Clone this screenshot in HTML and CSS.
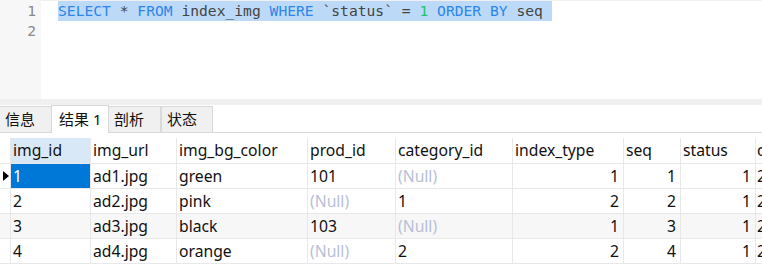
FILE: index.html
```html
<!DOCTYPE html>
<html>
<head>
<meta charset="utf-8">
<link rel="stylesheet" href="styles.css">
</head>
<body>
<div class="editor">
  <div class="gutter">
    <div class="ln">1</div>
    <div class="ln">2</div>
  </div>
  <div class="code">
    <div class="line"><span class="sel"><span class="kw">SELECT</span> * <span class="kw">FROM</span> index_img <span class="kw">WHERE</span> `status` = <span class="num">1</span> <span class="kw">ORDER BY</span> seq </span></div>
    <div class="line"></div>
  </div>
</div>
<div class="band"></div>
<div class="tabbar">
  <div class="tab first">信息</div>
  <div class="tab active">结果 1</div>
  <div class="tab">剖析</div>
  <div class="tab">状态</div>
</div>
<div class="grid">
  <div class="row head">
    <div class="c ind"></div>
    <div class="c hl">img_id</div>
    <div class="c">img_url</div>
    <div class="c">img_bg_color</div>
    <div class="c">prod_id</div>
    <div class="c">category_id</div>
    <div class="c">index_type</div>
    <div class="c">seq</div>
    <div class="c">status</div>
    <div class="c last">create_time</div>
  </div>
  <div class="row">
    <div class="c ind"><span class="tri"></span></div>
    <div class="c selcell">1</div>
    <div class="c">ad1.jpg</div>
    <div class="c">green</div>
    <div class="c">101</div>
    <div class="c null">(Null)</div>
    <div class="c r">1</div>
    <div class="c r">1</div>
    <div class="c r">1</div>
    <div class="c last">2020-01-01</div>
  </div>
  <div class="row">
    <div class="c ind"></div>
    <div class="c">2</div>
    <div class="c">ad2.jpg</div>
    <div class="c">pink</div>
    <div class="c null">(Null)</div>
    <div class="c">1</div>
    <div class="c r">2</div>
    <div class="c r">2</div>
    <div class="c r">1</div>
    <div class="c last">2020-01-01</div>
  </div>
  <div class="row alt">
    <div class="c ind"></div>
    <div class="c">3</div>
    <div class="c">ad3.jpg</div>
    <div class="c">black</div>
    <div class="c">103</div>
    <div class="c null">(Null)</div>
    <div class="c r">1</div>
    <div class="c r">3</div>
    <div class="c r">1</div>
    <div class="c last">2020-01-01</div>
  </div>
  <div class="row">
    <div class="c ind"></div>
    <div class="c">4</div>
    <div class="c">ad4.jpg</div>
    <div class="c">orange</div>
    <div class="c null">(Null)</div>
    <div class="c">2</div>
    <div class="c r">2</div>
    <div class="c r">4</div>
    <div class="c r">1</div>
    <div class="c last">2020-01-01</div>
  </div>
</div>
</body>
</html>
```

FILE: styles.css
```css
* { box-sizing: border-box; }
html, body { margin: 0; padding: 0; background: #fff; }
body {
  width: 762px;
  height: 279px;
  overflow: hidden;
  font-family: "Noto Sans", "Noto Sans CJK SC", sans-serif;
}

.editor {
  display: flex;
  height: 99px;
}
.gutter {
  width: 41px;
  background: #f7f7f7;
  padding-top: 1px;
}
.ln {
  height: 20px;
  line-height: 20px;
  text-align: right;
  padding-right: 5px;
  font-family: "DejaVu Sans Mono", monospace;
  font-size: 14.65px;
  color: #8a8a8a;
}
.code {
  flex: 1;
  border-top: 1px solid #f0f0f0;
  padding-left: 17px;
}
.line {
  height: 20px;
  line-height: 20px;
  font-family: "DejaVu Sans Mono", monospace;
  font-size: 14.65px;
  color: #444;
  white-space: pre;
}
.sel { background: #bcdaf8; display: inline-block; height: 20px; }
.kw { color: #2e86e8; }
.num { color: #1fc46a; }

.band { height: 6px; background: #f0f0f0; }

.tabbar {
  display: flex;
  align-items: flex-end;
  height: 28px;
  border-bottom: 1px solid #d9d9d9;
}
.tab {
  height: 26px;
  background: #f0f0f0;
  border: 1px solid #d9d9d9;
  border-bottom: none;
  font-size: 15px;
  line-height: 24px;
  padding-left: 5px;
  color: #111;
}
.tab.first { width: 53px; margin-left: -1px; }
.tab:nth-child(3) { width: 53px; margin-left: -1px; }
.tab:nth-child(4) { width: 52px; }
.tab.active {
  width: 58px;
  height: 28px;
  margin-bottom: -1px;
  background: #fff;
  padding-left: 7px;
  line-height: 26px;
  margin-left: -1px;
}

.grid { margin-top: 5px; }
.row {
  display: grid;
  grid-template-columns: 11px 80px 86px 131px 88px 117px 111px 57px 75px 1fr;
  height: 25px;
  border-bottom: 1px solid #e8e8e8;
}
.row.head { height: 26px; }
.row.alt { background: #f7f7f7; }
.c {
  border-right: 1px solid #e8e8e8;
  padding: 0 4px 0 2px;
  font-size: 15.7px;
  line-height: 24px;
  color: #111;
  white-space: nowrap;
  overflow: hidden;
}
.head .c { line-height: 25px; }
.c.last { border-right: none; padding-left: 1px; }
.c.ind { padding: 0; position: relative; }
.c.hl { background: #d9e8f7; }
.c.selcell { background: #0078d7; color: #fff; }
.c.r { text-align: right; }
.c.null { color: #b7bfd6; }
.tri {
  position: absolute;
  left: 3px;
  top: 7px;
  width: 0;
  height: 0;
  border-top: 5px solid transparent;
  border-bottom: 5px solid transparent;
  border-left: 6px solid #000;
}
```
